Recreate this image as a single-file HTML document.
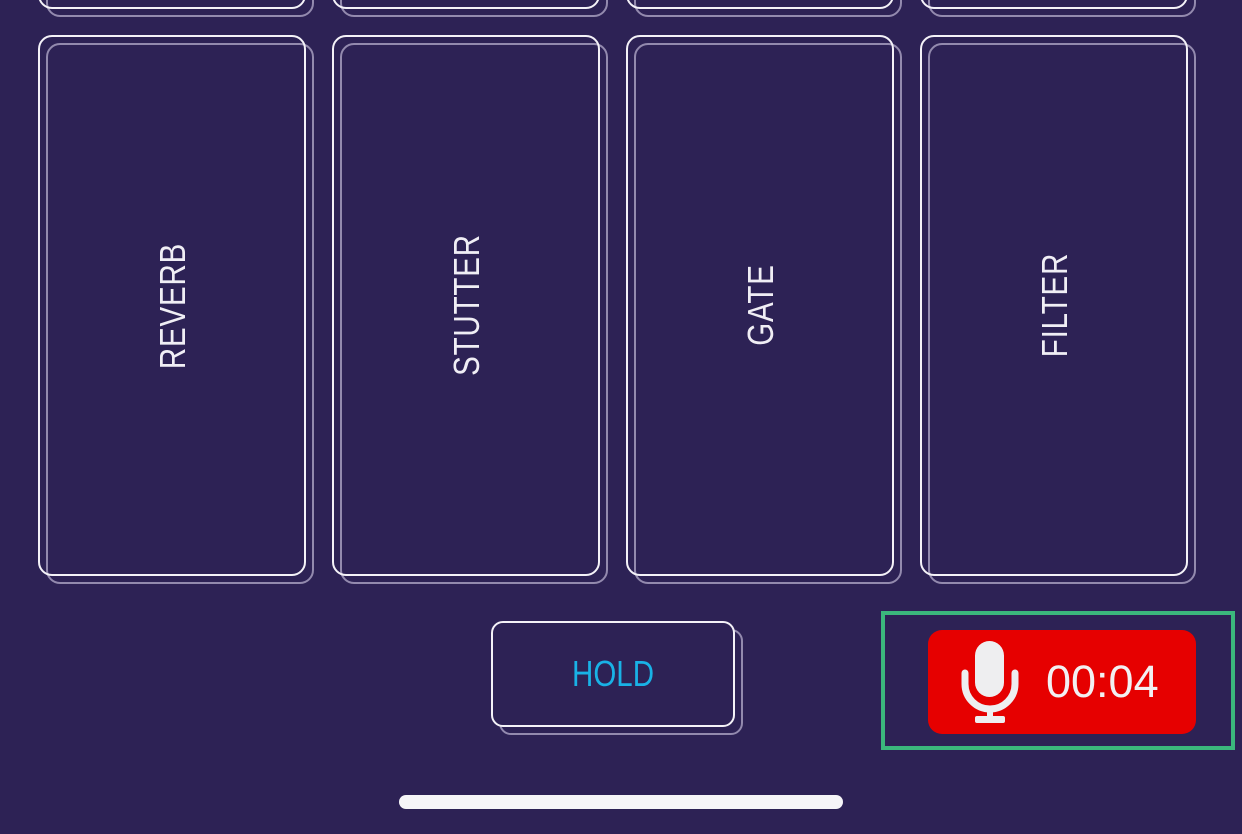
<!DOCTYPE html>
<html><head><style>
html,body{margin:0;padding:0}
body{width:1242px;height:834px;background:#2d2255;position:relative;overflow:hidden;font-family:"Liberation Sans Narrow","Liberation Sans",sans-serif}
.f,.b{position:absolute;border-radius:14px;box-sizing:border-box}
.f{border:2px solid #f4f2f8}
.b{border:2px solid #938aae}
.lbl{position:absolute;color:#f0eef5;font-size:36px;transform:translate(-50%,-50%) rotate(-90deg) scaleX(0.82);white-space:nowrap;letter-spacing:1px}
</style></head><body>
<div class="b" style="left:46px;top:-40px;width:268px;height:57px"></div><div class="f" style="left:38px;top:-48px;width:268px;height:57px"></div>
<div class="b" style="left:340px;top:-40px;width:268px;height:57px"></div><div class="f" style="left:332px;top:-48px;width:268px;height:57px"></div>
<div class="b" style="left:634px;top:-40px;width:268px;height:57px"></div><div class="f" style="left:626px;top:-48px;width:268px;height:57px"></div>
<div class="b" style="left:928px;top:-40px;width:268px;height:57px"></div><div class="f" style="left:920px;top:-48px;width:268px;height:57px"></div>
<div class="b" style="left:46px;top:43px;width:268px;height:541px"></div><div class="f" style="left:38px;top:35px;width:268px;height:541px"></div>
<div class="b" style="left:340px;top:43px;width:268px;height:541px"></div><div class="f" style="left:332px;top:35px;width:268px;height:541px"></div>
<div class="b" style="left:634px;top:43px;width:268px;height:541px"></div><div class="f" style="left:626px;top:35px;width:268px;height:541px"></div>
<div class="b" style="left:928px;top:43px;width:268px;height:541px"></div><div class="f" style="left:920px;top:35px;width:268px;height:541px"></div>
<div class="lbl" style="left:173px;top:306px">REVERB</div>
<div class="lbl" style="left:467px;top:305px">STUTTER</div>
<div class="lbl" style="left:761px;top:305px">GATE</div>
<div class="lbl" style="left:1055px;top:305px">FILTER</div>
<div class="b" style="left:499px;top:629px;width:244px;height:106px;border-radius:12px"></div>
<div class="f" style="left:491px;top:621px;width:244px;height:106px;border-radius:12px;background:#2d2255"></div>
<div style="position:absolute;left:491px;top:621px;width:244px;height:106px;line-height:106px;text-align:center;color:#19b2e6;font-size:36px"><span style="display:inline-block;transform:scaleX(0.82)">HOLD</span></div>
<div style="position:absolute;left:881px;top:611px;width:354px;height:139px;border:4px solid #3bb77c;box-sizing:border-box"></div>
<div style="position:absolute;left:928px;top:630px;width:268px;height:104px;border-radius:14px;background:#e60000"></div>
<svg style="position:absolute;left:958px;top:640px" width="64" height="86" viewBox="0 0 64 86">
<rect x="17" y="1" width="29" height="56" rx="14.5" fill="#eeeef0"/>
<path d="M7 33 V44 A25 25 0 0 0 57 44 V33" fill="none" stroke="#eeeef0" stroke-width="7" stroke-linecap="round"/>
<rect x="29" y="68" width="6" height="11" fill="#eeeef0"/>
<rect x="17" y="76" width="30" height="7" rx="2" fill="#eeeef0"/>
</svg>
<div style="position:absolute;left:1046px;top:654px;color:#f2f0f2;font-size:45px;line-height:56px"><span style="display:inline-block;transform:scaleX(1.0);transform-origin:left">00:04</span></div>
<div style="position:absolute;left:399px;top:795px;width:444px;height:14px;border-radius:7px;background:#f6f5f8"></div>
</body></html>
